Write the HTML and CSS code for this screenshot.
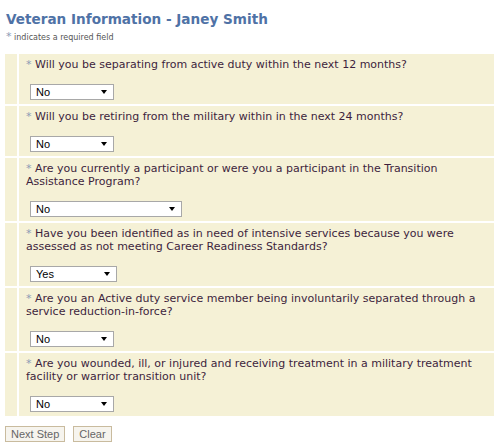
FILE: index.html
```html
<!DOCTYPE html>
<html lang="en">
<head>
  <meta charset="UTF-8">
  <title>Veteran Information</title>
  <link rel="stylesheet" href="styles.css">
</head>
<body>
  <h2 class="page-title">Veteran Information - Janey Smith</h2>
  <p class="req-note"><span class="star">*</span> indicates a required field</p>

  <form class="vet-form">
    <div class="questions">
      <div class="q-row">
        <div class="q-side"></div>
        <div class="q-body">
          <label><span class="star">*</span> Will you be separating from active duty within the next 12 months?</label>
          <span class="pick w-sm"><select><option>No</option><option>Yes</option></select></span>
        </div>
      </div>
      <div class="q-row">
        <div class="q-side"></div>
        <div class="q-body">
          <label><span class="star">*</span> Will you be retiring from the military within in the next 24 months?</label>
          <span class="pick w-sm"><select><option>No</option><option>Yes</option></select></span>
        </div>
      </div>
      <div class="q-row">
        <div class="q-side"></div>
        <div class="q-body">
          <label><span class="star">*</span> Are you currently a participant or were you a participant in the Transition Assistance Program?</label>
          <span class="pick w-lg"><select><option>No</option><option>Yes</option></select></span>
        </div>
      </div>
      <div class="q-row">
        <div class="q-side"></div>
        <div class="q-body">
          <label><span class="star">*</span> Have you been identified as in need of intensive services because you were assessed as not meeting Career Readiness Standards?</label>
          <span class="pick w-md"><select><option>Yes</option><option>No</option></select></span>
        </div>
      </div>
      <div class="q-row">
        <div class="q-side"></div>
        <div class="q-body">
          <label><span class="star">*</span> Are you an Active duty service member being involuntarily separated through a service reduction-in-force?</label>
          <span class="pick w-sm"><select><option>No</option><option>Yes</option></select></span>
        </div>
      </div>
      <div class="q-row">
        <div class="q-side"></div>
        <div class="q-body">
          <label><span class="star">*</span> Are you wounded, ill, or injured and receiving treatment in a military treatment facility or warrior transition unit?</label>
          <span class="pick w-sm"><select><option>No</option><option>Yes</option></select></span>
        </div>
      </div>
    </div>
    <div class="actions">
      <button type="submit">Next Step</button>
      <button type="reset">Clear</button>
    </div>
  </form>
</body>
</html>
```

FILE: styles.css
```css
body {
  margin: 0;
  padding: 0 6px 0 5px;
  font-family: "DejaVu Sans", Verdana, sans-serif;
  background: #fff;
  color: #3d1f3d;
}
.page-title {
  margin: 0;
  padding: 10px 0 0 1px;
  font-size: 13.6px;
  line-height: 18px;
  color: #4f72a6;
}
.req-note {
  margin: 3px 0 0 1px;
  font-size: 8px;
  line-height: 12px;
  color: #555;
}
.req-note .star {
  font-size: 11px;
}
.star {
  color: #8c9bb5;
}
.vet-form {
  margin-top: 10px;
}
.questions {
  display: flex;
  flex-direction: column;
  gap: 2px;
}
.q-row {
  display: grid;
  grid-template-columns: 12px 1fr;
  gap: 2px;
}
.q-side, .q-body {
  background: #f5f1d6;
}
.q-body {
  padding: 4px 4px 4px 7px;
  font-size: 11px;
  line-height: 13px;
}
.q-body label {
  display: block;
  margin-bottom: 13px;
}
.pick {
  display: block;
  position: relative;
  margin-left: 4px;
}
.pick select {
  appearance: none;
  -webkit-appearance: none;
  display: block;
  width: 100%;
  height: 16px;
  margin: 0;
  padding: 0 0 0 5px;
  border: 1px solid #a8a8a8;
  border-radius: 0;
  background: #fff;
  font-family: "Liberation Sans", Arial, sans-serif;
  font-size: 11px;
  line-height: 14px;
  color: #000;
}
.pick::after {
  content: "";
  position: absolute;
  right: 7px;
  top: 6px;
  border-left: 3px solid transparent;
  border-right: 3px solid transparent;
  border-top: 4px solid #000;
  pointer-events: none;
}
.w-sm { width: 84px; }
.w-md { width: 87px; }
.w-lg { width: 152px; }
.actions {
  display: flex;
  gap: 8px;
  margin-top: 10px;
}
.actions button {
  height: 16px;
  padding: 0 5px;
  border: 1px solid #c9bb9e;
  border-radius: 0;
  background: #f6f4ee;
  font-family: "Liberation Sans", Arial, sans-serif;
  font-size: 11px;
  line-height: 14px;
  color: #666;
}
```
